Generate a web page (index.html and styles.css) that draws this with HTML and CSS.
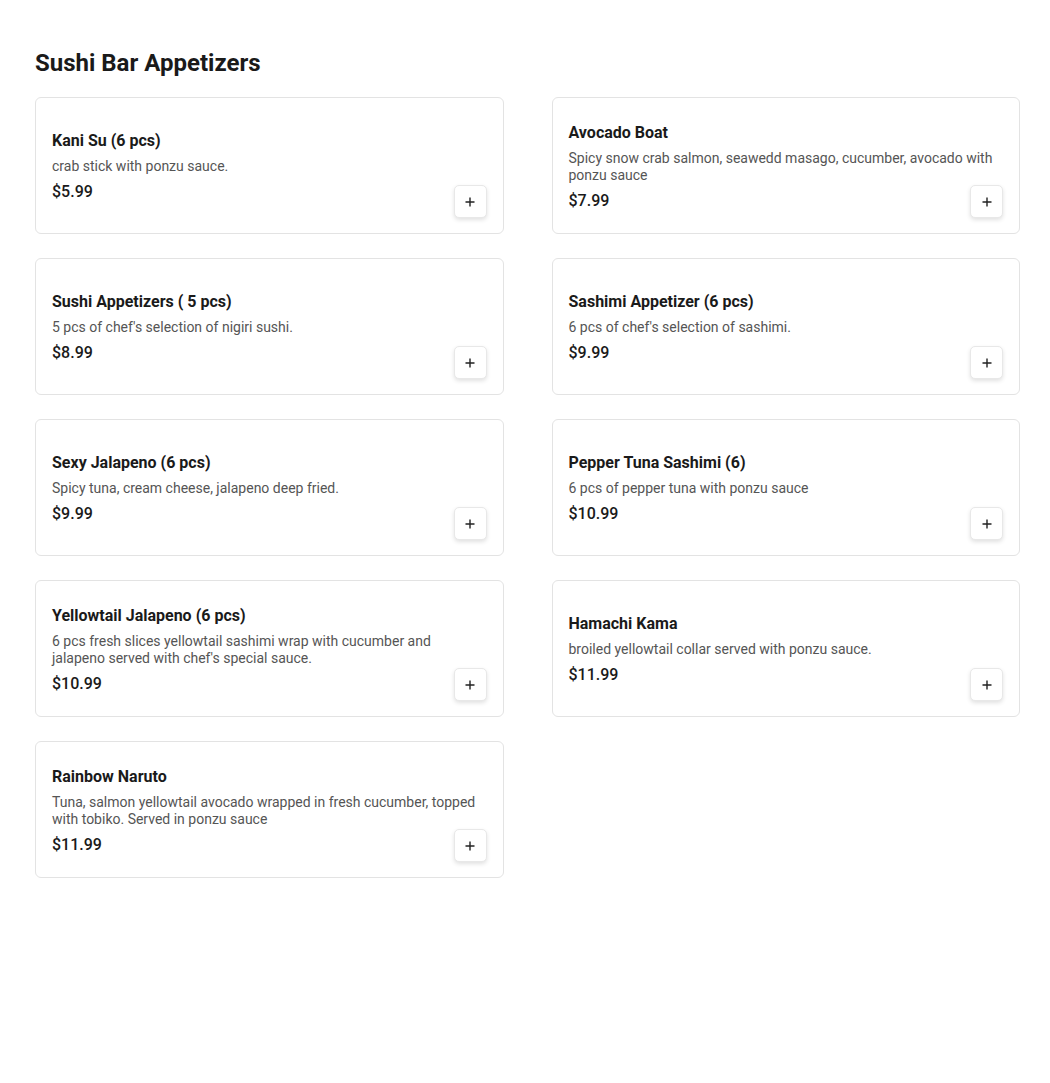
FILE: index.html
```html
<!DOCTYPE html>
<html lang="en">
<head>
<meta charset="utf-8">
<title>Sushi Bar Appetizers</title>
<link rel="stylesheet" href="styles.css">
</head>
<body>
<main class="page">
  <h1 class="section-title">Sushi Bar Appetizers</h1>
  <div class="grid">
    <div class="card">
      <div class="info">
        <div class="name">Kani Su (6 pcs)</div>
        <div class="desc">crab stick with ponzu sauce.</div>
        <div class="price">$5.99</div>
      </div>
      <button class="add" aria-label="Add"><svg viewBox="0 0 12 12" width="12" height="12"><path d="M6 1.5v9M1.5 6h9" stroke="#222" stroke-width="1.4" fill="none"/></svg></button>
    </div>
    <div class="card">
      <div class="info">
        <div class="name">Avocado Boat</div>
        <div class="desc">Spicy snow crab salmon, seawedd masago, cucumber, avocado with ponzu sauce</div>
        <div class="price">$7.99</div>
      </div>
      <button class="add" aria-label="Add"><svg viewBox="0 0 12 12" width="12" height="12"><path d="M6 1.5v9M1.5 6h9" stroke="#222" stroke-width="1.4" fill="none"/></svg></button>
    </div>
    <div class="card">
      <div class="info">
        <div class="name">Sushi Appetizers ( 5 pcs)</div>
        <div class="desc">5 pcs of chef's selection of nigiri sushi.</div>
        <div class="price">$8.99</div>
      </div>
      <button class="add" aria-label="Add"><svg viewBox="0 0 12 12" width="12" height="12"><path d="M6 1.5v9M1.5 6h9" stroke="#222" stroke-width="1.4" fill="none"/></svg></button>
    </div>
    <div class="card">
      <div class="info">
        <div class="name">Sashimi Appetizer (6 pcs)</div>
        <div class="desc">6 pcs of chef's selection of sashimi.</div>
        <div class="price">$9.99</div>
      </div>
      <button class="add" aria-label="Add"><svg viewBox="0 0 12 12" width="12" height="12"><path d="M6 1.5v9M1.5 6h9" stroke="#222" stroke-width="1.4" fill="none"/></svg></button>
    </div>
    <div class="card">
      <div class="info">
        <div class="name">Sexy Jalapeno (6 pcs)</div>
        <div class="desc">Spicy tuna, cream cheese, jalapeno deep fried.</div>
        <div class="price">$9.99</div>
      </div>
      <button class="add" aria-label="Add"><svg viewBox="0 0 12 12" width="12" height="12"><path d="M6 1.5v9M1.5 6h9" stroke="#222" stroke-width="1.4" fill="none"/></svg></button>
    </div>
    <div class="card">
      <div class="info">
        <div class="name">Pepper Tuna Sashimi (6)</div>
        <div class="desc">6 pcs of pepper tuna with ponzu sauce</div>
        <div class="price">$10.99</div>
      </div>
      <button class="add" aria-label="Add"><svg viewBox="0 0 12 12" width="12" height="12"><path d="M6 1.5v9M1.5 6h9" stroke="#222" stroke-width="1.4" fill="none"/></svg></button>
    </div>
    <div class="card">
      <div class="info">
        <div class="name">Yellowtail Jalapeno (6 pcs)</div>
        <div class="desc">6 pcs fresh slices yellowtail sashimi wrap with cucumber and jalapeno served with chef's special sauce.</div>
        <div class="price">$10.99</div>
      </div>
      <button class="add" aria-label="Add"><svg viewBox="0 0 12 12" width="12" height="12"><path d="M6 1.5v9M1.5 6h9" stroke="#222" stroke-width="1.4" fill="none"/></svg></button>
    </div>
    <div class="card">
      <div class="info">
        <div class="name">Hamachi Kama</div>
        <div class="desc">broiled yellowtail collar served with ponzu sauce.</div>
        <div class="price">$11.99</div>
      </div>
      <button class="add" aria-label="Add"><svg viewBox="0 0 12 12" width="12" height="12"><path d="M6 1.5v9M1.5 6h9" stroke="#222" stroke-width="1.4" fill="none"/></svg></button>
    </div>
    <div class="card">
      <div class="info">
        <div class="name">Rainbow Naruto</div>
        <div class="desc">Tuna, salmon yellowtail avocado wrapped in fresh cucumber, topped with tobiko. Served in ponzu sauce</div>
        <div class="price">$11.99</div>
      </div>
      <button class="add" aria-label="Add"><svg viewBox="0 0 12 12" width="12" height="12"><path d="M6 1.5v9M1.5 6h9" stroke="#222" stroke-width="1.4" fill="none"/></svg></button>
    </div>
  </div>
</main>
</body>
</html>
```

FILE: styles.css
```css
* { box-sizing: border-box; }
html, body { margin: 0; background: #fff; }
body {
  font-family: Roboto, "Liberation Sans", Arial, sans-serif;
  color: #1a1a1a;
}
.page {
  padding: 47px 30px 40px 35px;
}
.section-title {
  margin: 0 0 18px;
  font-size: 24px;
  line-height: 32px;
  font-weight: 700;
  color: #1a1a1a;
}
.grid {
  display: grid;
  grid-template-columns: 1fr 1fr;
  column-gap: 48px;
  row-gap: 24px;
}
.card {
  position: relative;
  height: 137px;
  border: 1px solid #e3e3e3;
  border-radius: 6px;
  padding: 17px 16px 15px;
  display: flex;
  align-items: center;
}
.info {
  flex: 1;
  min-width: 0;
}
.name {
  font-size: 16px;
  line-height: 24px;
  font-weight: 700;
  color: #1a1a1a;
}
.desc {
  margin-top: 5px;
  font-size: 14px;
  line-height: 17px;
  color: #555;
}
.price {
  margin-top: 5px;
  font-size: 16px;
  line-height: 24px;
  font-weight: 500;
  color: #1a1a1a;
}
.add {
  position: absolute;
  right: 16px;
  bottom: 15px;
  width: 33px;
  height: 33px;
  padding: 0;
  border: 1px solid #e8e8e8;
  border-radius: 5px;
  background: #fff;
  box-shadow: 0 2px 4px rgba(0,0,0,0.12);
  display: flex;
  align-items: center;
  justify-content: center;
  cursor: pointer;
}
.add svg { display: block; }
```
